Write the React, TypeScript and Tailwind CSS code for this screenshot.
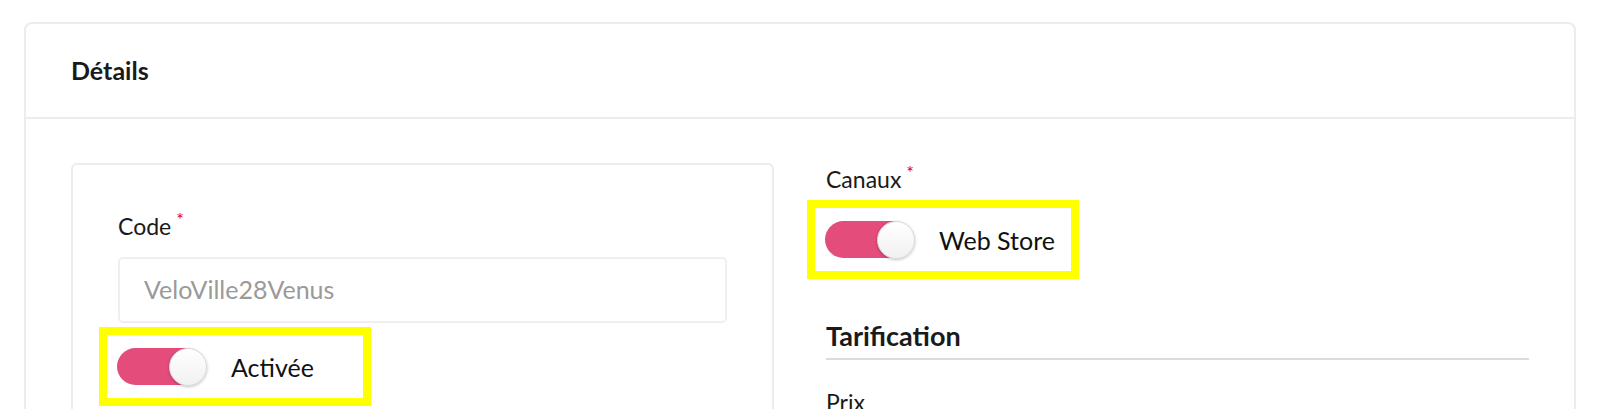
import React from "react";

function Toggle() {
  return (
    <div className="relative h-[37px] w-[90px] shrink-0">
      <div className="h-[37px] w-[86px] rounded-full bg-[#e44c7c]" />
      <div className="absolute right-0 top-0 h-[38px] w-[38px] rounded-full border border-[#d9d9d9] bg-gradient-to-b from-white to-[#f1f1f1] shadow-[0_1px_3px_rgba(0,0,0,0.25)]" />
    </div>
  );
}

function Highlighted({ label }: { label: string }) {
  return (
    <div className="-ml-[19px] flex w-[272px] items-center gap-[24px] border-8 border-[#ffff00] py-[13px] pl-[10px]">
      <Toggle />
      <span className="text-[25px] leading-[34px] text-[#111]">{label}</span>
    </div>
  );
}

function Label({ text }: { text: string }) {
  return (
    <div className="text-[23px] leading-[33px] text-[#1a1a1a]">
      {text}
      <span className="relative -top-[9px] ml-[5px] text-[18px] leading-none text-[#e10000]">*</span>
    </div>
  );
}

export default function App() {
  return (
    <div className="min-h-screen bg-white px-6 pt-[22px] font-['Lato',sans-serif]">
      <div className="rounded-lg border-2 border-[#ececec]">
        <div className="flex h-[95px] items-center border-b-2 border-[#ececec] px-[45px]">
          <h2 className="text-[25px] font-bold text-[#1a1a1a]">Détails</h2>
        </div>

        <div className="grid grid-cols-2 gap-[52px] px-[45px] pt-[44px] pb-10">
          <div className="rounded-md border-2 border-[#ececec] px-[45px] pt-[45px] pb-10">
            <Label text="Code" />
            <div className="mt-[14px] flex h-[66px] items-center rounded-[5px] border-2 border-[#efefef] px-[24px] text-[25px] text-[#9a9a9a]">
              VeloVille28Venus
            </div>
            <div className="mt-[4px]">
              <Highlighted label="Activée" />
            </div>
          </div>

          <div>
            <Label text="Canaux" />
            <div className="mt-[4px]">
              <Highlighted label="Web Store" />
            </div>
            <h3 className="mt-[40px] border-b-2 border-[#dcdcdc] pb-[5px] text-[27px] font-bold leading-[34px] text-[#1a1a1a]">
              Tarification
            </h3>
            <div className="mt-[26px] text-[23px] leading-[33px] text-[#1a1a1a]">Prix</div>
          </div>
        </div>
      </div>
    </div>
  );
}
